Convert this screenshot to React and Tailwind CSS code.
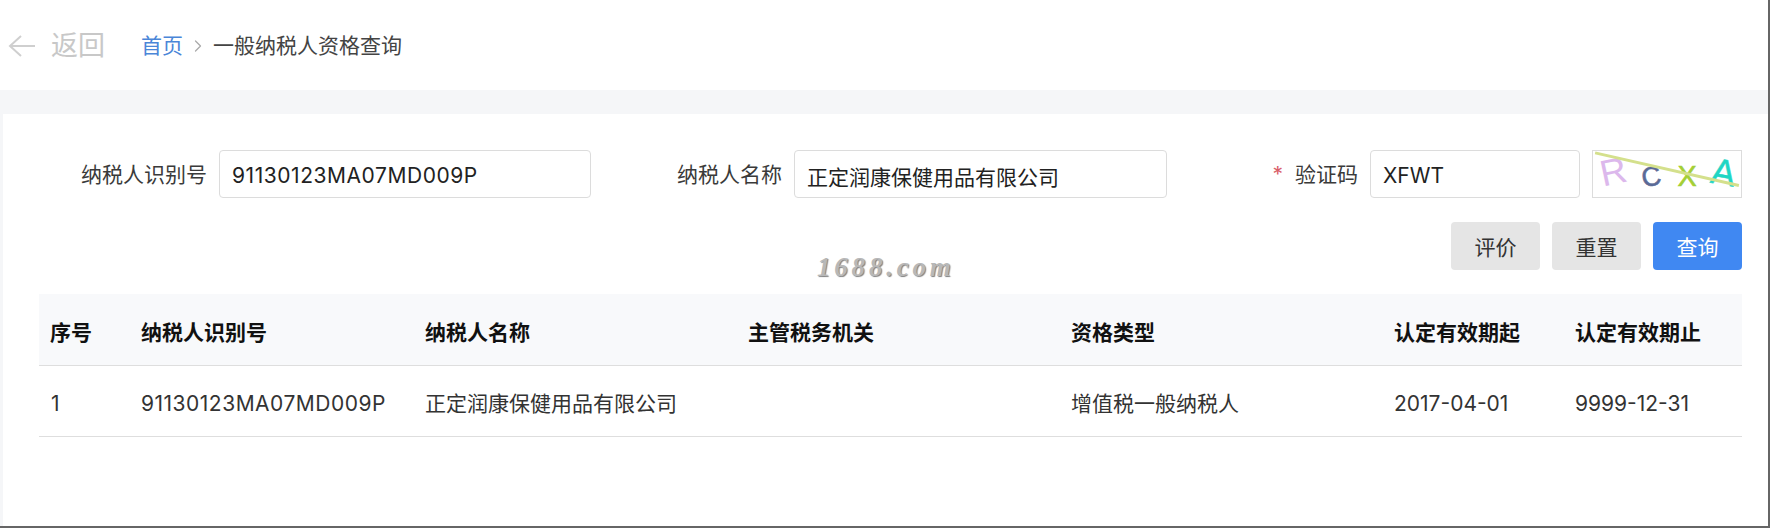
import React from 'react';
import { ChevronRight } from 'lucide-react';

const columns = [
  { label: '序号', value: '1', width: 'w-[91px]', cell: 'pl-[12px]' },
  { label: '纳税人识别号', value: '91130123MA07MD009P', width: 'w-[284px]', cell: 'tracking-[0.5px]' },
  { label: '纳税人名称', value: '正定润康保健用品有限公司', width: 'w-[323px]' },
  { label: '主管税务机关', value: '', width: 'w-[323px]' },
  { label: '资格类型', value: '增值税一般纳税人', width: 'w-[323px]' },
  { label: '认定有效期起', value: '2017-04-01', width: 'w-[181px]' },
  { label: '认定有效期止', value: '9999-12-31', width: 'w-[178px]' },
];

function Field({ label, value, required, inputClass = '', children }) {
  return (
    <div className="flex items-center">
      <label className="w-[168px] mr-3 pt-px text-right text-[21px] text-[#3a3a3a] whitespace-nowrap">
        {required && <span className="mr-3 text-[#d9606a]">*</span>}
        {label}
      </label>
      <input
        readOnly
        value={value}
        className={`h-12 min-w-0 flex-1 rounded border border-[#dcdcdc] bg-white px-3 pt-[3px] text-[21px] text-[#222] outline-none ${inputClass}`}
      />
      {children}
    </div>
  );
}

function Captcha() {
  return (
    <svg className="ml-3 h-12 w-[150px] shrink-0 border border-[#dcdcdc] bg-white" viewBox="0 0 150 48">
      <text x="7" y="35" fontSize="38" fill="#dcb8ec" fontFamily="Liberation Sans" transform="rotate(-12 18 30)">R</text>
      <text x="49" y="36" fontSize="28" fill="#5a6a96" stroke="#5a6a96" strokeWidth="0.6" fontFamily="Liberation Sans" transform="rotate(-10 60 30)">C</text>
      <text x="86" y="37" fontSize="30" fill="#a4cf35" stroke="#a4cf35" strokeWidth="0.6" fontFamily="Liberation Sans">X</text>
      <text x="121" y="35" fontSize="38" fill="#1fd6c4" stroke="#1fd6c4" strokeWidth="0.5" fontFamily="Liberation Sans" transform="rotate(10 132 24)">A</text>
      <line x1="0" y1="2" x2="150" y2="36" stroke="#d4e08c" strokeWidth="3" />
    </svg>
  );
}

function Button({ children, primary }) {
  return (
    <button
      className={`h-12 w-[89px] rounded pt-[3px] text-[21px] ${
        primary ? 'bg-[#4088f2] text-white' : 'bg-[#e5e5e5] text-[#333]'
      }`}
    >
      {children}
    </button>
  );
}

export default function App() {
  return (
    <div className="relative h-[528px] overflow-hidden border-r-2 border-b-2 border-[#666] bg-white font-['Inter','Noto_Sans_CJK_SC',sans-serif]">
      <header className="flex h-[90px] items-center pl-[8px] pt-[2px]">
        <svg className="h-[24px] w-[27px] text-[#cfcfcf]" viewBox="0 0 27 24" fill="none" stroke="currentColor" strokeWidth="2">
          <path d="M27 12H2M13 2 2 12l11 10" />
        </svg>
        <span className="ml-[16px] text-[27px] text-[#c8c8c8]">返回</span>
        <a className="ml-[36px] text-[21px] text-[#4a86d8]">首页</a>
        <ChevronRight className="mx-[5px] h-5 w-5 text-[#aaa]" strokeWidth={1.5} />
        <span className="text-[21px] text-[#444]">一般纳税人资格查询</span>
      </header>
      <div className="h-6 bg-[#f5f6f8]" />

      <main className="h-[412px] border-l-[3px] border-[#f5f6f8] pl-9 pr-[26px] pt-9">
        <div className="grid grid-cols-[552px_553px_minmax(0,1fr)] gap-x-[23px]">
          <Field label="纳税人识别号" value="91130123MA07MD009P" inputClass="tracking-[0.55px]" />
          <Field label="纳税人名称" value="正定润康保健用品有限公司" />
          <Field label="验证码" value="XFWT" required>
            <Captcha />
          </Field>
        </div>

        <div className="mt-6 flex justify-end gap-3">
          <Button>评价</Button>
          <Button>重置</Button>
          <Button primary>查询</Button>
        </div>

        <table className="mt-6 w-[1703px] table-fixed border-collapse text-[21px]">
          <thead>
            <tr className="h-[71px] border-b border-[#dedede] bg-[#f8f9fb]">
              {columns.map((col) => (
                <th key={col.label} className={`${col.width} px-[11px] pt-[6px] text-left font-bold text-[#111]`}>
                  {col.label}
                </th>
              ))}
            </tr>
          </thead>
          <tbody>
            <tr className="h-[71px] border-b border-[#dedede]">
              {columns.map((col) => (
                <td key={col.label} className={`px-[11px] pt-[6px] text-[#333] whitespace-nowrap ${col.cell ?? ''}`}>
                  {col.value}
                </td>
              ))}
            </tr>
          </tbody>
        </table>
      </main>

      {/* watermark */}
      <div className="absolute left-[817px] top-[247px] font-['Liberation_Serif',serif] text-[27px] font-bold italic tracking-[3.8px] text-[#b8b8b8] [text-shadow:1px_1px_1px_#808080]">
        1688.com
      </div>
    </div>
  );
}
